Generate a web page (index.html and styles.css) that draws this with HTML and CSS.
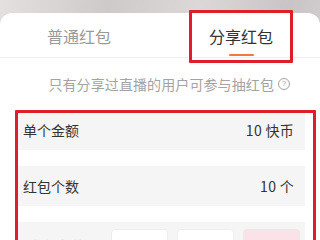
FILE: index.html
```html
<!DOCTYPE html>
<html lang="zh">
<head>
<meta charset="utf-8">
<link rel="stylesheet" href="styles.css">
</head>
<body>
<div class="screen">
  <div class="hero"></div>
  <div class="card">
    <div class="tabs">
      <div class="tab">普通红包</div>
      <div class="tab active">分享红包<span class="underline"></span></div>
    </div>
    <div class="hint">只有分享过直播的用户可参与抽红包 <span class="qmark">?</span></div>
    <div class="rows">
      <div class="row"><span class="label">单个金额</span><span class="value">10 快币</span></div>
      <div class="row"><span class="label">红包个数</span><span class="value">10 个</span></div>
      <div class="row row-opts">
        <span class="label faint">参与条件</span>
        <span class="opts">
          <span class="opt"></span>
          <span class="opt"></span>
          <span class="opt pink"></span>
        </span>
      </div>
    </div>
  </div>
  <div class="mark mark-tab"></div>
  <div class="mark mark-rows"></div>
</div>
</body>
</html>
```
FILE: styles.css
```css
html, body {
  margin: 0;
  padding: 0;
}
body {
  width: 320px;
  height: 240px;
  overflow: hidden;
  font-family: "Noto Sans CJK SC", "Noto Sans", sans-serif;
  background: #fff;
}
.screen {
  position: relative;
  width: 320px;
  height: 240px;
  overflow: hidden;
  background: linear-gradient(100deg, #e4e0e0 0%, #cfcaca 30%, #dcd8d8 55%, #c9c5c6 80%, #d7d3d3 100%);
}
.hero {
  height: 13px;
}
.card {
  background: #fff;
  border-radius: 12px 12px 0 0;
  height: 240px;
}
.tabs {
  display: flex;
  height: 44px;
  border-bottom: 1px solid #eeeeee;
}
.tab {
  position: relative;
  flex: 1;
  display: flex;
  align-items: center;
  justify-content: center;
  font-size: 16px;
  color: #9a9a9a;
  padding-top: 1px;
}
.tab:first-child {
  padding-right: 4px;
}
.tab.active {
  color: #333;
}
.underline {
  position: absolute;
  left: 67px;
  bottom: 1px;
  width: 25px;
  height: 2px;
  border-radius: 1px;
  background: #f07a3c;
}
.hint {
  height: 54px;
  display: flex;
  align-items: center;
  justify-content: flex-end;
  padding-right: 30px;
  font-size: 14px;
  color: #a3a3a3;
  letter-spacing: 0.1px;
  margin-top: -2px;
  padding-top: 2px;
  box-sizing: border-box;
}
.qmark {
  display: inline-flex;
  align-items: center;
  justify-content: center;
  width: 10px;
  height: 10px;
  border: 1px solid #a3a3a3;
  border-radius: 50%;
  font-size: 8px;
  line-height: 1;
  margin-left: 4px;
  font-family: "Liberation Sans", sans-serif;
}
.rows {
  margin: 0 15px 0 17px;
  display: flex;
  flex-direction: column;
  gap: 16px;
}
.row {
  height: 40px;
  background: #f5f5f5;
  display: flex;
  align-items: center;
  justify-content: space-between;
  padding: 0 11px 0 6px;
  font-size: 14px;
  color: #333;
}
.value {
  letter-spacing: 0.3px;
}
.row-opts {
  align-items: flex-start;
  padding-top: 7px;
  box-sizing: border-box;
  height: 60px;
}
.faint {
  color: #e2e2e2;
  margin-left: 6px;
  margin-top: 6px;
}
.opts {
  display: flex;
  gap: 9px;
  margin-right: -6px;
}
.opt {
  width: 57px;
  height: 28px;
  border-radius: 4px;
  background: #fff;
  border: 1px solid #eeeeee;
  box-sizing: border-box;
}
.opt.pink {
  background: #fbe1e8;
  border-color: #fbe1e8;
}
.mark {
  position: absolute;
  border: 3px solid #dd1f2b;
  box-sizing: border-box;
  border-radius: 1px;
}
.mark-tab {
  left: 189px;
  top: 10px;
  width: 104px;
  height: 53px;
}
.mark-rows {
  left: 15px;
  top: 110px;
  width: 301px;
  height: 150px;
}
```
